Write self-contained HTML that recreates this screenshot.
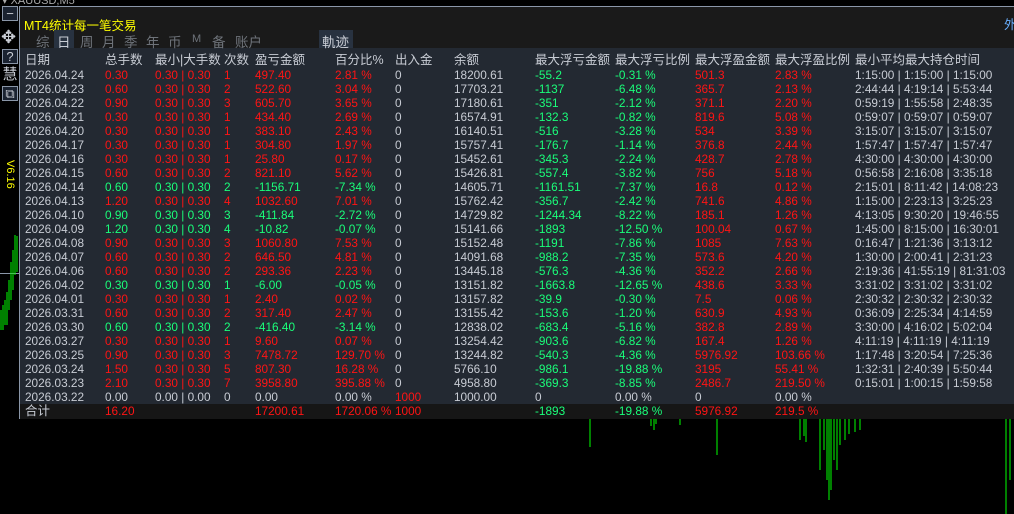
<!DOCTYPE html>
<html><head><meta charset="utf-8"><style>
*{margin:0;padding:0;box-sizing:border-box}
body{width:1014px;height:514px;background:#000;overflow:hidden;position:relative;font-family:"Liberation Sans","Noto Sans CJK SC",sans-serif;}
.abs{position:absolute}
#panel{left:19px;top:6px;width:995px;height:413px;border-left:1px solid #8a96a8;border-top:1px solid #8a96a8;border-bottom:1px solid #8a96a8;background:#232932}
#title{left:0;top:0;width:995px;height:41px;background:#1a1a1a}
.row{position:absolute;left:5px;height:14px;font-size:11.8px;line-height:14px;white-space:nowrap;color:#c8ccd4}
.row span{position:absolute;top:0}
.r{color:#ff1414}.g{color:#1aff7a}
.hd{font-size:12.5px;color:#c8ccd4}
.tb{position:absolute;left:2px;width:16px;height:15px;border:1px solid #8a96a8;background:#1a2230;color:#c8ccd4;font-size:13px;line-height:13px;text-align:center}
</style></head><body>
<div class="abs" style="left:2px;top:-6px;color:#aaa;font-size:11px">▾ XAUUSD,M5</div>
<div class="tb" style="top:6px">−</div>
<div class="abs" style="left:1px;top:28px;color:#c8ccd4;font-size:18px;line-height:18px">✥</div>
<div class="tb" style="top:49px">?</div>
<div class="tb" style="top:67px;border:none;background:none;font-size:15px;line-height:15px">慧</div>
<div class="tb" style="top:86px">⧉</div>
<div class="abs" style="top:160px;color:#ffff00;font-size:11px;transform:rotate(90deg);transform-origin:left top;left:16px">V6.16</div>
<div class="abs" style="left:0;top:273px;width:19px;height:1px;background:#8a96a8"></div>
<svg class="abs" style="left:0;top:0" width="1014" height="514">
<g stroke="#00ff00" stroke-width="1">
<path d="M1 310V330M3 305V330M5 300V325M7 292V325M9 280V310M11 262V300M13 250V290M15 235V275M17 236V272"/>
<path d="M590 419V447M651 419V426M654 419V430M656 419V424M680 419V425M717 419V455M800 419V440M804 419V436M806 419V442M820 419V470M824 419V450M827 419V480M829 419V500M831 419V490M834 419V460M837 419V470M840 419V445M845 419V440M849 419V434M855 419V432M860 419V430M1006 419V514M1010 419V480"/>
</g></svg>
<div id="panel" class="abs">
<div id="title" class="abs"></div>
<div class="abs" style="left:4px;top:8px;color:#ffff00;font-size:12.5px">MT4统计每一笔交易</div>
<div class="abs" style="left:984px;top:7px;color:#6ab0ff;font-size:12.5px">外</div>
<div class="abs" style="left:34px;top:23px;width:20px;height:18px;background:#283240"></div>
<div class="abs" style="left:299px;top:23px;width:34px;height:18px;background:#283240"></div>
<div class="abs" style="left:16px;top:24px;font-size:13.5px;color:#6e737a;white-space:nowrap;word-spacing:0">
<span style="position:absolute;left:0">综</span><span style="position:absolute;left:21px;color:#c8ccd4">日</span><span style="position:absolute;left:44px">周</span><span style="position:absolute;left:66px">月</span><span style="position:absolute;left:88px">季</span><span style="position:absolute;left:110px">年</span><span style="position:absolute;left:132px">币</span><span style="position:absolute;left:156px;font-size:11px;top:2px">M</span><span style="position:absolute;left:176px">备</span><span style="position:absolute;left:199px">账户</span><span style="position:absolute;left:286px;color:#c8ccd4">軌迹</span></div>
<div class="row hd" style="top:46px;height:16px"><span style="left:0">日期</span><span style="left:80px">总手数</span><span style="left:130px">最小|大手数</span><span style="left:199px">次数</span><span style="left:230px">盈亏金额</span><span style="left:310px">百分比%</span><span style="left:370px">出入金</span><span style="left:429px">余额</span><span style="left:510px">最大浮亏金额</span><span style="left:590px">最大浮亏比例</span><span style="left:670px">最大浮盈金额</span><span style="left:750px">最大浮盈比例</span><span style="left:830px">最小平均最大持仓时间</span></div>
<div id="rows"></div>
<div class="abs" style="left:0;top:397px;width:995px;height:15px;background:#161616"></div>
<div class="row" style="top:397px"><span style="left:0;font-size:12.5px">合计</span><span class="r" style="left:80px">16.20</span><span class="r" style="left:230px">17200.61</span><span class="r" style="left:310px">1720.06 %</span><span class="r" style="left:370px">1000</span><span class="g" style="left:510px">-1893</span><span class="g" style="left:590px">-19.88 %</span><span class="r" style="left:670px">5976.92</span><span class="r" style="left:750px">219.5 %</span></div>
</div>
<script>
var D=[
["2026.04.24","r","0.30","1","497.40","2.81 %","18200.61","-55.2","-0.31 %","501.3","2.83 %","1:15:00 | 1:15:00 | 1:15:00"],
["2026.04.23","r","0.60","2","522.60","3.04 %","17703.21","-1137","-6.48 %","365.7","2.13 %","2:44:44 | 4:19:14 | 5:53:44"],
["2026.04.22","r","0.90","3","605.70","3.65 %","17180.61","-351","-2.12 %","371.1","2.20 %","0:59:19 | 1:55:58 | 2:48:35"],
["2026.04.21","r","0.30","1","434.40","2.69 %","16574.91","-132.3","-0.82 %","819.6","5.08 %","0:59:07 | 0:59:07 | 0:59:07"],
["2026.04.20","r","0.30","1","383.10","2.43 %","16140.51","-516","-3.28 %","534","3.39 %","3:15:07 | 3:15:07 | 3:15:07"],
["2026.04.17","r","0.30","1","304.80","1.97 %","15757.41","-176.7","-1.14 %","376.8","2.44 %","1:57:47 | 1:57:47 | 1:57:47"],
["2026.04.16","r","0.30","1","25.80","0.17 %","15452.61","-345.3","-2.24 %","428.7","2.78 %","4:30:00 | 4:30:00 | 4:30:00"],
["2026.04.15","r","0.60","2","821.10","5.62 %","15426.81","-557.4","-3.82 %","756","5.18 %","0:56:58 | 2:16:08 | 3:35:18"],
["2026.04.14","g","0.60","2","-1156.71","-7.34 %","14605.71","-1161.51","-7.37 %","16.8","0.12 %","2:15:01 | 8:11:42 | 14:08:23"],
["2026.04.13","r","1.20","4","1032.60","7.01 %","15762.42","-356.7","-2.42 %","741.6","4.86 %","1:15:00 | 2:23:13 | 3:25:23"],
["2026.04.10","g","0.90","3","-411.84","-2.72 %","14729.82","-1244.34","-8.22 %","185.1","1.26 %","4:13:05 | 9:30:20 | 19:46:55"],
["2026.04.09","g","1.20","4","-10.82","-0.07 %","15141.66","-1893","-12.50 %","100.04","0.67 %","1:45:00 | 8:15:00 | 16:30:01"],
["2026.04.08","r","0.90","3","1060.80","7.53 %","15152.48","-1191","-7.86 %","1085","7.63 %","0:16:47 | 1:21:36 | 3:13:12"],
["2026.04.07","r","0.60","2","646.50","4.81 %","14091.68","-988.2","-7.35 %","573.6","4.20 %","1:30:00 | 2:00:41 | 2:31:23"],
["2026.04.06","r","0.60","2","293.36","2.23 %","13445.18","-576.3","-4.36 %","352.2","2.66 %","2:19:36 | 41:55:19 | 81:31:03"],
["2026.04.02","g","0.30","1","-6.00","-0.05 %","13151.82","-1663.8","-12.65 %","438.6","3.33 %","3:31:02 | 3:31:02 | 3:31:02"],
["2026.04.01","r","0.30","1","2.40","0.02 %","13157.82","-39.9","-0.30 %","7.5","0.06 %","2:30:32 | 2:30:32 | 2:30:32"],
["2026.03.31","r","0.60","2","317.40","2.47 %","13155.42","-153.6","-1.20 %","630.9","4.93 %","0:36:09 | 2:25:34 | 4:14:59"],
["2026.03.30","g","0.60","2","-416.40","-3.14 %","12838.02","-683.4","-5.16 %","382.8","2.89 %","3:30:00 | 4:16:02 | 5:02:04"],
["2026.03.27","r","0.30","1","9.60","0.07 %","13254.42","-903.6","-6.82 %","167.4","1.26 %","4:11:19 | 4:11:19 | 4:11:19"],
["2026.03.25","r","0.90","3","7478.72","129.70 %","13244.82","-540.3","-4.36 %","5976.92","103.66 %","1:17:48 | 3:20:54 | 7:25:36"],
["2026.03.24","r","1.50","5","807.30","16.28 %","5766.10","-986.1","-19.88 %","3195","55.41 %","1:32:31 | 2:40:39 | 5:50:44"],
["2026.03.23","r","2.10","7","3958.80","395.88 %","4958.80","-369.3","-8.85 %","2486.7","219.50 %","0:15:01 | 1:00:15 | 1:59:58"]];
var h="";
D.forEach(function(d,i){var c=d[1];h+='<div class="row" style="top:'+(61+i*14)+'px"><span style="left:0">'+d[0]+'</span><span class="'+c+'" style="left:80px">'+d[2]+'</span><span class="'+c+'" style="left:130px">0.30 | 0.30</span><span class="'+c+'" style="left:199px">'+d[3]+'</span><span class="'+c+'" style="left:230px">'+d[4]+'</span><span class="'+c+'" style="left:310px">'+d[5]+'</span><span style="left:370px">0</span><span style="left:429px">'+d[6]+'</span><span class="g" style="left:510px">'+d[7]+'</span><span class="g" style="left:590px">'+d[8]+'</span><span class="r" style="left:670px">'+d[9]+'</span><span class="r" style="left:750px">'+d[10]+'</span><span style="left:830px">'+d[11]+'</span></div>';});
h+='<div class="row" style="top:383px"><span style="left:0">2026.03.22</span><span style="left:80px">0.00</span><span style="left:130px">0.00 | 0.00</span><span style="left:199px">0</span><span style="left:230px">0.00</span><span style="left:310px">0.00 %</span><span class="r" style="left:370px">1000</span><span style="left:429px">1000.00</span><span style="left:510px">0</span><span style="left:590px">0.00 %</span><span style="left:670px">0</span><span style="left:750px">0.00 %</span></div>';
document.getElementById("rows").innerHTML=h;
</script>
</body></html>
